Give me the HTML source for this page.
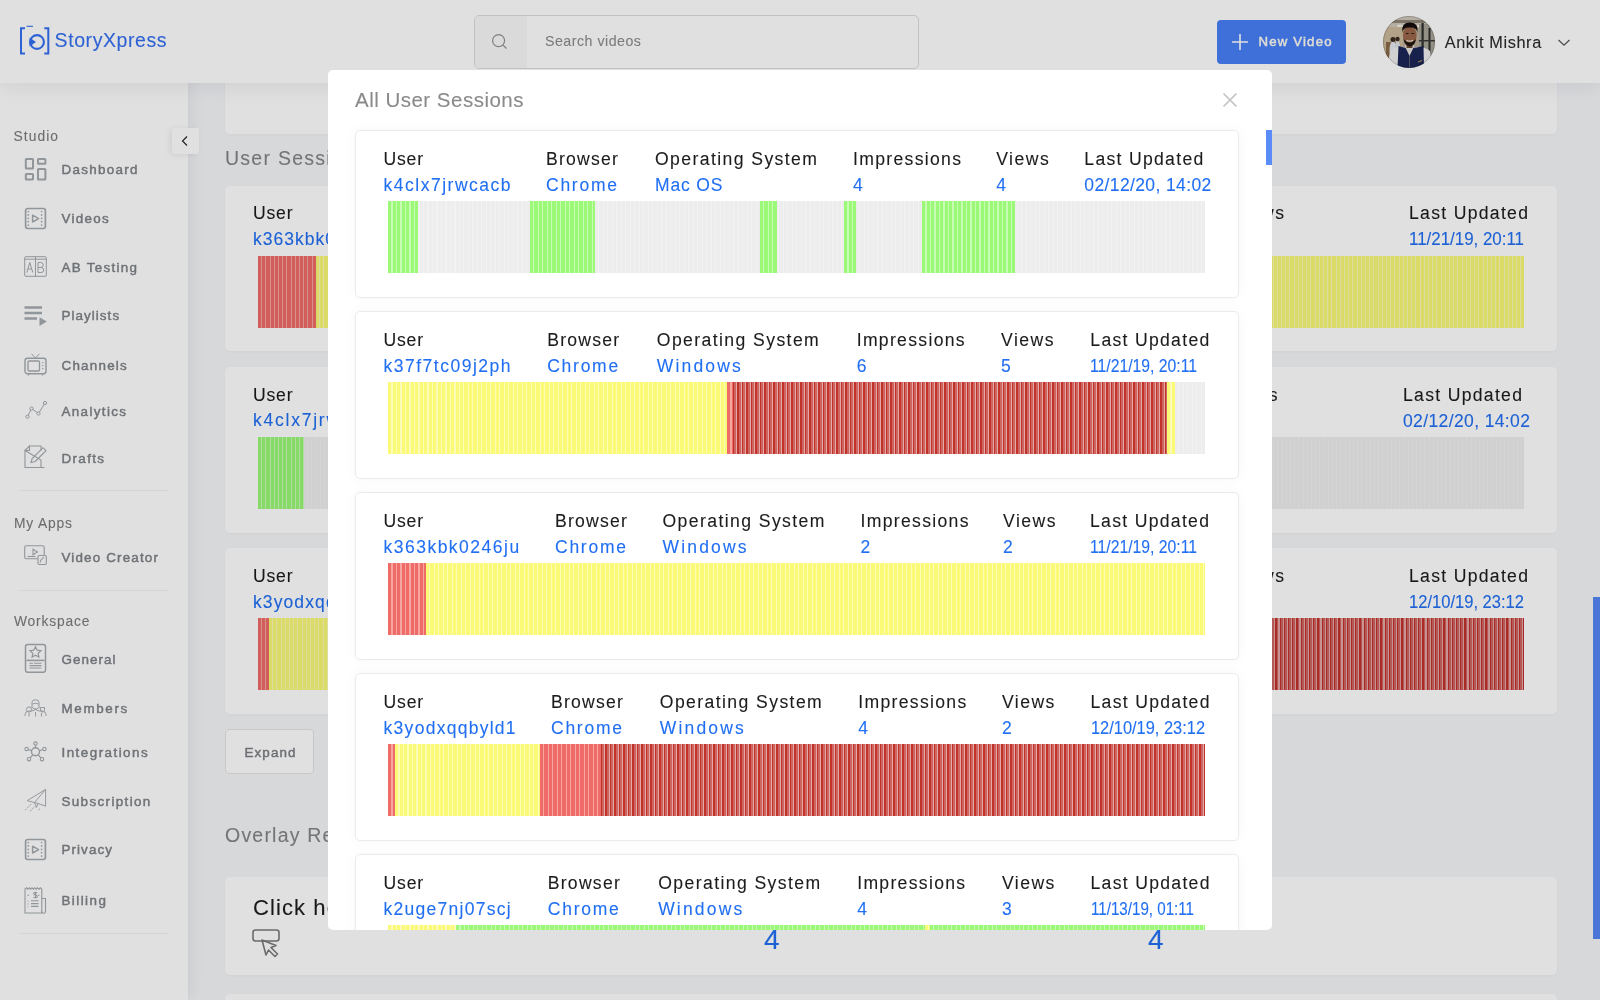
<!DOCTYPE html><html><head><meta charset="utf-8"><style>
html,body{margin:0;padding:0;}
body{width:1600px;height:1000px;overflow:hidden;position:relative;background:#f5f6f9;font-family:"Liberation Sans",sans-serif;}
.t{position:absolute;white-space:nowrap;-webkit-text-stroke:0.1px currentColor;}
.card{position:absolute;background:#fff;border-radius:5px;}
</style></head><body><div style="position:absolute;left:0;top:0;width:1600px;height:1000px;will-change:transform;overflow:hidden;">
<div class="card" style="left:225px;top:-60px;width:1332px;height:194px;box-shadow:0 1px 4px rgba(0,0,0,0.04);"></div>
<div class="t" style="left:225.0px;top:147.5px;font-size:19.5px;line-height:21.80px;color:#858585;letter-spacing:1.26px;font-weight:400;">User Sessions</div>
<div class="card" style="left:225px;top:185.5px;width:1332px;height:165.5px;box-shadow:0 1px 4px rgba(0,0,0,0.04);"></div>
<div class="t" style="left:253.0px;top:204.1px;font-size:17.6px;line-height:19.68px;color:#1c1c1c;letter-spacing:0.78px;font-weight:400;">User</div>
<div class="t" style="left:253.0px;top:229.6px;font-size:17.5px;line-height:19.57px;color:#216ff3;letter-spacing:1.02px;font-weight:400;">k363kbk0246ju</div>
<div class="t" style="left:1231.5px;top:204.1px;font-size:17.6px;line-height:19.68px;color:#1c1c1c;letter-spacing:1.47px;font-weight:400;">Views</div>
<div class="t" style="left:1409.0px;top:204.1px;font-size:17.6px;line-height:19.68px;color:#1c1c1c;letter-spacing:1.30px;font-weight:400;">Last Updated</div>
<div class="t" style="left:1409.0px;top:230.1px;font-size:17.5px;line-height:19.57px;color:#216ff3;letter-spacing:0.00px;font-weight:400;transform:scaleX(0.9662);transform-origin:0 0;">11/21/19, 20:11</div>
<div style="position:absolute;left:258.0px;top:255.5px;width:58.2px;height:72.0px;background:repeating-linear-gradient(90deg,#ee6b67 0,#ee6b67 3.2px,#f6a5a1 3.2px,#f6a5a1 4.2px);"></div>
<div style="position:absolute;left:316.2px;top:255.5px;width:1207.8px;height:72.0px;background:repeating-linear-gradient(90deg,#fafa76 0,#fafa76 3.2px,#fcfcb8 3.2px,#fcfcb8 4.2px);"></div>
<div class="card" style="left:225px;top:367px;width:1332px;height:165.5px;box-shadow:0 1px 4px rgba(0,0,0,0.04);"></div>
<div class="t" style="left:253.0px;top:385.6px;font-size:17.6px;line-height:19.68px;color:#1c1c1c;letter-spacing:0.78px;font-weight:400;">User</div>
<div class="t" style="left:253.0px;top:411.1px;font-size:17.5px;line-height:19.57px;color:#216ff3;letter-spacing:1.76px;font-weight:400;">k4clx7jrwcacb</div>
<div class="t" style="left:1225.0px;top:385.6px;font-size:17.6px;line-height:19.68px;color:#1c1c1c;letter-spacing:1.47px;font-weight:400;">Views</div>
<div class="t" style="left:1403.0px;top:385.6px;font-size:17.6px;line-height:19.68px;color:#1c1c1c;letter-spacing:1.30px;font-weight:400;">Last Updated</div>
<div class="t" style="left:1403.0px;top:411.6px;font-size:17.5px;line-height:19.57px;color:#216ff3;letter-spacing:0.38px;font-weight:400;">02/12/20, 14:02</div>
<div style="position:absolute;left:258.0px;top:437.0px;width:46.0px;height:72.0px;background:repeating-linear-gradient(90deg,#9bf977 0,#9bf977 3.2px,#c6fcb3 3.2px,#c6fcb3 4.2px);"></div>
<div style="position:absolute;left:304.0px;top:437.0px;width:1220.0px;height:72.0px;background:repeating-linear-gradient(90deg,#ededed 0,#ededed 3.2px,#f2f2f2 3.2px,#f2f2f2 4.2px);"></div>
<div class="card" style="left:225px;top:548.4px;width:1332px;height:165.5px;box-shadow:0 1px 4px rgba(0,0,0,0.04);"></div>
<div class="t" style="left:253.0px;top:567.0px;font-size:17.6px;line-height:19.68px;color:#1c1c1c;letter-spacing:0.78px;font-weight:400;">User</div>
<div class="t" style="left:253.0px;top:592.5px;font-size:17.5px;line-height:19.57px;color:#216ff3;letter-spacing:1.10px;font-weight:400;">k3yodxqqbyld1</div>
<div class="t" style="left:1231.5px;top:567.0px;font-size:17.6px;line-height:19.68px;color:#1c1c1c;letter-spacing:1.47px;font-weight:400;">Views</div>
<div class="t" style="left:1409.0px;top:567.0px;font-size:17.6px;line-height:19.68px;color:#1c1c1c;letter-spacing:1.30px;font-weight:400;">Last Updated</div>
<div class="t" style="left:1409.0px;top:593.0px;font-size:17.5px;line-height:19.57px;color:#216ff3;letter-spacing:0.00px;font-weight:400;transform:scaleX(0.9455);transform-origin:0 0;">12/10/19, 23:12</div>
<div style="position:absolute;left:258.0px;top:618.4px;width:11.4px;height:72.0px;background:repeating-linear-gradient(90deg,#ee6b67 0,#ee6b67 3.2px,#f6a5a1 3.2px,#f6a5a1 4.2px);"></div>
<div style="position:absolute;left:269.4px;top:618.4px;width:430.6px;height:72.0px;background:repeating-linear-gradient(90deg,#fafa76 0,#fafa76 3.2px,#fcfcb8 3.2px,#fcfcb8 4.2px);"></div>
<div style="position:absolute;left:700.0px;top:618.4px;width:824.0px;height:72.0px;background:repeating-linear-gradient(90deg,#c2322b 0,#c2322b 1.3px,#cd6661 1.3px,#cd6661 3.1px,#e3a9a6 3.1px,#e3a9a6 4.2px);"></div>
<div style="position:absolute;left:225px;top:729px;width:87px;height:43px;border:1px solid #e4e4e4;border-radius:4px;background:#fff;"></div>
<div class="t" style="left:244.5px;top:744.7px;font-size:13.4px;line-height:14.98px;color:#7b7e83;letter-spacing:1.11px;font-weight:400;-webkit-text-stroke:0.45px #7b7e83;">Expand</div>
<div class="t" style="left:225.0px;top:825.3px;font-size:19.5px;line-height:21.80px;color:#858585;letter-spacing:1.21px;font-weight:400;">Overlay Reports</div>
<div class="card" style="left:225px;top:876.5px;width:1332px;height:98.0px;box-shadow:0 1px 4px rgba(0,0,0,0.04);"></div>
<div class="t" style="left:253.0px;top:895.7px;font-size:22px;line-height:24.60px;color:#1c1c1c;letter-spacing:1.09px;font-weight:400;">Click here</div>
<svg style="position:absolute;left:250px;top:927px" width="34" height="32" viewBox="0 0 34 32"><rect x="3" y="3" width="26" height="11" rx="2.5" fill="none" stroke="#7a7a7a" stroke-width="1.6"/><path d="M12 13 L16 28 L18.5 23 L25 29.5 L27.5 27 L21 20.5 L26 18.5 Z" fill="#fff" stroke="#7a7a7a" stroke-width="1.6" stroke-linejoin="round"/></svg>
<div class="t" style="left:764.0px;top:924.4px;font-size:28px;line-height:31.30px;color:#216ff3;letter-spacing:0.00px;font-weight:400;">4</div>
<div class="t" style="left:1148.0px;top:924.4px;font-size:28px;line-height:31.30px;color:#216ff3;letter-spacing:0.00px;font-weight:400;">4</div>
<div class="card" style="left:225px;top:993.5px;width:1332px;height:106.5px;box-shadow:0 1px 4px rgba(0,0,0,0.04);"></div>
<div style="position:absolute;left:1593.0px;top:597.0px;width:7.0px;height:342.0px;background:#5588f5;"></div>
<div style="position:absolute;left:0;top:0;width:188px;height:1000px;background:#fff;box-shadow:2px 0 18px rgba(0,0,0,0.07);"></div>
<div class="t" style="left:13.6px;top:128.5px;font-size:13.8px;line-height:15.43px;color:#7d7d7d;letter-spacing:1.05px;font-weight:400;">Studio</div>
<svg style="position:absolute;left:24px;top:157px" width="23" height="24" viewBox="0 0 23 24"><g fill="none" stroke="#a6abb0" stroke-width="2"><rect x="1.8" y="2" width="7.2" height="9.6" rx="0.6"/><rect x="14" y="2" width="7.4" height="4.8" rx="0.6"/><rect x="1.8" y="17" width="7.2" height="5.6" rx="0.6"/><rect x="14" y="12" width="7.4" height="10.6" rx="0.6"/></g></svg>
<div class="t" style="left:61.5px;top:162.3px;font-size:13.4px;line-height:14.98px;color:#7e8287;letter-spacing:1.31px;font-weight:400;-webkit-text-stroke:0.45px #7e8287;">Dashboard</div>
<svg style="position:absolute;left:24px;top:206.5px" width="23" height="23" viewBox="0 0 23 23"><rect x="1.6" y="1.5" width="19.8" height="20" rx="2.2" fill="none" stroke="#a6abb0" stroke-width="1.7"/><circle cx="4.3" cy="4.5" r="0.85" fill="#a6abb0"/><circle cx="17.6" cy="4.5" r="0.85" fill="#a6abb0"/><circle cx="4.3" cy="7.9" r="0.85" fill="#a6abb0"/><circle cx="17.6" cy="7.9" r="0.85" fill="#a6abb0"/><circle cx="4.3" cy="11.3" r="0.85" fill="#a6abb0"/><circle cx="17.6" cy="11.3" r="0.85" fill="#a6abb0"/><circle cx="4.3" cy="14.7" r="0.85" fill="#a6abb0"/><circle cx="17.6" cy="14.7" r="0.85" fill="#a6abb0"/><circle cx="4.3" cy="18.1" r="0.85" fill="#a6abb0"/><circle cx="17.6" cy="18.1" r="0.85" fill="#a6abb0"/><path d="M8.6 8.2L14.6 11.6 8.6 15z" fill="none" stroke="#a6abb0" stroke-width="1.5" stroke-linejoin="round"/></svg>
<div class="t" style="left:61.5px;top:211.1px;font-size:13.4px;line-height:14.98px;color:#7e8287;letter-spacing:1.29px;font-weight:400;-webkit-text-stroke:0.45px #7e8287;">Videos</div>
<svg style="position:absolute;left:24px;top:256px" width="23" height="21" viewBox="0 0 23 21"><g fill="none" stroke="#a6abb0" stroke-width="1"><rect x="0.7" y="0.7" width="21.6" height="19.6" rx="1"/><path d="M0.7 3.2h21.6M11.5 0.7v19.6"/><path d="M2.8 16.5L5.8 6.5 8.8 16.5M3.8 13h4M14 6.5v10h3.2a2.5 2.5 0 000-5H14h2.8a2.5 2.5 0 000-5z"/></g></svg>
<div class="t" style="left:61.5px;top:259.6px;font-size:13.4px;line-height:14.98px;color:#7e8287;letter-spacing:1.31px;font-weight:400;-webkit-text-stroke:0.45px #7e8287;">AB Testing</div>
<svg style="position:absolute;left:24px;top:304px" width="23" height="23" viewBox="0 0 23 23"><path d="M0.5 3.5h17.5M0.5 9h17.5M0.5 14.5h12.5" stroke="#a6abb0" stroke-width="2.4"/><path d="M15.5 13.2L22.8 17.6 15.5 22z" fill="#a6abb0"/></svg>
<div class="t" style="left:61.5px;top:308.3px;font-size:13.4px;line-height:14.98px;color:#7e8287;letter-spacing:1.06px;font-weight:400;-webkit-text-stroke:0.45px #7e8287;">Playlists</div>
<svg style="position:absolute;left:24px;top:352.5px" width="23" height="23" viewBox="0 0 23 23"><g fill="none" stroke="#a6abb0"><path d="M7.5 0.8L11.5 5 15.5 0.8" stroke-width="1"/><rect x="1" y="5.2" width="21" height="15.5" rx="2.5" stroke-width="1.4"/><rect x="4" y="8" width="11.5" height="10" rx="1.2" stroke-width="1.3"/><path d="M18.8 9v1.2M18.8 12v1.2M18.8 15v1.2M4.5 21v1.5M18.5 21v1.5" stroke-width="1.2"/></g></svg>
<div class="t" style="left:61.5px;top:357.5px;font-size:13.4px;line-height:14.98px;color:#7e8287;letter-spacing:1.24px;font-weight:400;-webkit-text-stroke:0.45px #7e8287;">Channels</div>
<svg style="position:absolute;left:24px;top:400px" width="23" height="20" viewBox="0 0 23 20"><g fill="none" stroke="#a6abb0" stroke-width="1"><path d="M3.5 16.7L7.5 8.6 14.5 13.5 21 3"/><circle cx="3.5" cy="16.7" r="1.6" fill="#fff"/><circle cx="7.5" cy="8.6" r="1.6" fill="#fff"/><circle cx="14.5" cy="13.5" r="1.6" fill="#fff"/><circle cx="21" cy="3" r="1.6" fill="#fff"/></g></svg>
<div class="t" style="left:61.5px;top:404.3px;font-size:13.4px;line-height:14.98px;color:#7e8287;letter-spacing:1.37px;font-weight:400;-webkit-text-stroke:0.45px #7e8287;">Analytics</div>
<svg style="position:absolute;left:24px;top:444.5px" width="23" height="24" viewBox="0 0 23 24"><g fill="none" stroke="#a6abb0" stroke-width="1.1"><path d="M5.5 1h11.5v5M17 15v7.5H1V5.5z M5.5 1L1 5.5h4.5z"/><path d="M7 17.5l1.2-4L19 2.7l3 3L11.2 16.5z M4.5 22.5h16"/></g></svg>
<div class="t" style="left:61.5px;top:450.6px;font-size:13.4px;line-height:14.98px;color:#7e8287;letter-spacing:1.35px;font-weight:400;-webkit-text-stroke:0.45px #7e8287;">Drafts</div>
<div style="position:absolute;left:19.0px;top:490.3px;width:150.0px;height:1.0px;background:#f2f3f5;"></div>
<div class="t" style="left:14.0px;top:516.0px;font-size:13.8px;line-height:15.43px;color:#7d7d7d;letter-spacing:0.85px;font-weight:400;">My Apps</div>
<svg style="position:absolute;left:24px;top:545px" width="23" height="21" viewBox="0 0 23 21"><g fill="none" stroke="#a6abb0" stroke-width="1.1"><rect x="0.7" y="0.7" width="19.5" height="13" rx="1.5"/><path d="M9 4.2l4.5 2.8L9 9.8z"/><path d="M3.5 11.5h8"/><rect x="14" y="10.5" width="8.3" height="9" rx="1.2" fill="#fff"/><path d="M16 17.5l0.8-2.3 3-3"/></g></svg>
<div class="t" style="left:61.5px;top:549.5px;font-size:13.4px;line-height:14.98px;color:#7e8287;letter-spacing:1.17px;font-weight:400;-webkit-text-stroke:0.45px #7e8287;">Video Creator</div>
<div style="position:absolute;left:19.0px;top:589.5px;width:150.0px;height:1.0px;background:#f2f3f5;"></div>
<div class="t" style="left:14.0px;top:614.4px;font-size:13.8px;line-height:15.43px;color:#7d7d7d;letter-spacing:0.83px;font-weight:400;">Workspace</div>
<svg style="position:absolute;left:24px;top:642.5px" width="23" height="30" viewBox="0 0 23 30"><g fill="none" stroke="#a6abb0"><rect x="1.5" y="1.5" width="20" height="27.8" rx="2.3" stroke-width="1.5"/><path d="M11.5 3.7l1.7 3.5 3.8.5-2.8 2.6.7 3.8-3.4-1.9-3.4 1.9.7-3.8-2.8-2.6 3.8-.5z" stroke-width="1.2"/><path d="M2.5 17.4h18" stroke-width="1.6"/><path d="M5.5 20.3h3.5M10 20.3h7.5M5.5 22.6h12M5.5 25h12" stroke-width="1.1"/></g></svg>
<div class="t" style="left:61.5px;top:651.9px;font-size:13.4px;line-height:14.98px;color:#7e8287;letter-spacing:1.06px;font-weight:400;-webkit-text-stroke:0.45px #7e8287;">General</div>
<svg style="position:absolute;left:24px;top:698.5px" width="23" height="18" viewBox="0 0 23 18"><g fill="none" stroke="#a6abb0" stroke-width="0.95"><path d="M8 9.5V3.3Q8 0.8 11.5 0.8Q15 0.8 15 3.3V9.5"/><path d="M8.2 5Q11.5 3.5 14.8 5"/><path d="M8.5 8.5Q11.5 12 14.5 8.5"/><circle cx="5" cy="10.5" r="2.6"/><path d="M16.5 8.5h4v2.5a2 2 0 01-4 0z"/><path d="M1 17v-1.5q0-3 4-3.5l2.5 0q4-0.5 4 -2.5q0 2 4 2.5l2.5 0q4 0.5 4 3.5V17"/><path d="M5 14v3.5M11.5 13v4.5M17.5 14v3.5"/></g></svg>
<div class="t" style="left:61.5px;top:700.7px;font-size:13.4px;line-height:14.98px;color:#7e8287;letter-spacing:1.66px;font-weight:400;-webkit-text-stroke:0.45px #7e8287;">Members</div>
<svg style="position:absolute;left:24px;top:741px" width="23" height="21" viewBox="0 0 23 21"><g fill="none" stroke="#a6abb0"><circle cx="11.5" cy="10.8" r="4" stroke-width="1.4"/><circle cx="11.5" cy="2.6" r="1.7" stroke-width="1.1"/><circle cx="2.6" cy="8" r="1.7" stroke-width="1.1"/><circle cx="20.4" cy="8" r="1.7" stroke-width="1.1"/><circle cx="5" cy="18.2" r="1.7" stroke-width="1.1"/><circle cx="18" cy="18.2" r="1.7" stroke-width="1.1"/><path d="M11.5 4.3v2.5M4.2 8.5l3.5 1.3M18.8 8.5l-3.5 1.3M6.2 16.9l2.5-3M16.8 16.9l-2.5-3" stroke-width="1.1"/></g></svg>
<div class="t" style="left:61.5px;top:745.1px;font-size:13.4px;line-height:14.98px;color:#7e8287;letter-spacing:1.47px;font-weight:400;-webkit-text-stroke:0.45px #7e8287;">Integrations</div>
<svg style="position:absolute;left:24px;top:788px" width="23" height="24" viewBox="0 0 23 24"><g fill="none" stroke="#a6abb0" stroke-width="0.95" stroke-linejoin="round"><path d="M3.2 12.6L21.6 1.4V18.2L14 15.5z"/><path d="M21.6 1.4L10.5 14.5 12.4 19.6 14 15.5"/><path d="M1.2 22.2L8 15.2M6 23.2L11 18.5M14.5 22L17 20" stroke-dasharray="2 1.2"/></g></svg>
<div class="t" style="left:61.5px;top:793.6px;font-size:13.4px;line-height:14.98px;color:#7e8287;letter-spacing:1.37px;font-weight:400;-webkit-text-stroke:0.45px #7e8287;">Subscription</div>
<svg style="position:absolute;left:24px;top:837.5px" width="23" height="23" viewBox="0 0 23 23"><rect x="1.6" y="1.5" width="19.8" height="20" rx="2.2" fill="none" stroke="#a6abb0" stroke-width="1.7"/><circle cx="4.3" cy="4.5" r="0.85" fill="#a6abb0"/><circle cx="17.6" cy="4.5" r="0.85" fill="#a6abb0"/><circle cx="4.3" cy="7.9" r="0.85" fill="#a6abb0"/><circle cx="17.6" cy="7.9" r="0.85" fill="#a6abb0"/><circle cx="4.3" cy="11.3" r="0.85" fill="#a6abb0"/><circle cx="17.6" cy="11.3" r="0.85" fill="#a6abb0"/><circle cx="4.3" cy="14.7" r="0.85" fill="#a6abb0"/><circle cx="17.6" cy="14.7" r="0.85" fill="#a6abb0"/><circle cx="4.3" cy="18.1" r="0.85" fill="#a6abb0"/><circle cx="17.6" cy="18.1" r="0.85" fill="#a6abb0"/><path d="M8.6 8.2L14.6 11.6 8.6 15z" fill="none" stroke="#a6abb0" stroke-width="1.5" stroke-linejoin="round"/></svg>
<div class="t" style="left:61.5px;top:842.3px;font-size:13.4px;line-height:14.98px;color:#7e8287;letter-spacing:1.08px;font-weight:400;-webkit-text-stroke:0.45px #7e8287;">Privacy</div>
<svg style="position:absolute;left:24px;top:886.5px" width="23" height="27" viewBox="0 0 23 27"><g fill="none" stroke="#a6abb0" stroke-width="1.1"><path d="M1 2.2l1.4-1.4 1.4 1.4 1.4-1.4 1.4 1.4 1.4-1.4 1.4 1.4 1.4-1.4 1.4 1.4 1.4-1.4 1.4 1.4 1.4-1.4 1.4 1.4V26H1z"/><path d="M18 11.5h3.5v13a1.7 1.7 0 01-3.5 0"/><path d="M3.5 8.2h1.5M14 8.2h1.5M4 13.8v.8M4 16.6v.8M4 19.4v.8M7 13.8h7.5M7 16.6h7.5M7 19.4h7.5"/><path d="M11.5 4.8v6.5M13.2 6.2q-1-1-2.2-0.8q-1.5 0.3-1.3 1.5q0.2 1 1.7 1.2q1.8 0.3 1.8 1.5q0 1.3-1.8 1.2q-1.3 0-2-0.8"/></g></svg>
<div class="t" style="left:61.5px;top:892.7px;font-size:13.4px;line-height:14.98px;color:#7e8287;letter-spacing:1.44px;font-weight:400;-webkit-text-stroke:0.45px #7e8287;">Billing</div>
<div style="position:absolute;left:19.0px;top:933.0px;width:150.0px;height:1.0px;background:#f2f3f5;"></div>
<div style="position:absolute;left:0;top:0;width:1600px;height:83px;background:#fff;box-shadow:0 3px 22px rgba(0,0,0,0.08);"></div>
<svg style="position:absolute;left:18px;top:24px" width="34" height="32" viewBox="0 0 34 32">
<path d="M7 4.3H3V29.6H7" fill="none" stroke="#3570f2" stroke-width="2"/>
<path d="M26.3 4.3H30.3V29.6H26.3" fill="none" stroke="#3570f2" stroke-width="2"/>
<path d="M8.5 2.3H15" stroke="#3570f2" stroke-width="1.1"/>
<circle cx="19" cy="18" r="6.9" fill="none" stroke="#3570f2" stroke-width="2.1"/>
<path d="M11.6 13.6L18 18L11.6 22.6Z" fill="#3570f2"/>
</svg>
<div class="t" style="left:54.6px;top:29.7px;font-size:19.5px;line-height:21.80px;color:#3570f2;letter-spacing:0.58px;font-weight:400;">StoryXpress</div>
<div style="position:absolute;left:473.5px;top:14.5px;width:443px;height:52px;border:1px solid #dcdde0;border-top-width:1.5px;border-radius:5px;background:#fff;overflow:hidden;"><div style="position:absolute;left:0;top:0;width:52px;height:100%;background:#f9f9f9;"></div></div>
<svg style="position:absolute;left:489px;top:31px" width="22" height="22" viewBox="0 0 22 22"><circle cx="9.6" cy="9.6" r="6" fill="none" stroke="#8f9296" stroke-width="1.2"/><path d="M13.8 13.8L17.5 17.5" stroke="#8f9296" stroke-width="1.2"/></svg>
<div class="t" style="left:545.0px;top:34.0px;font-size:14.2px;line-height:15.88px;color:#8e8e8e;letter-spacing:0.50px;font-weight:400;">Search videos</div>
<div style="position:absolute;left:1216.7px;top:19.8px;width:129.7px;height:44.4px;background:#4880f7;border-radius:4px;"></div>
<svg style="position:absolute;left:1231px;top:33px" width="18" height="18" viewBox="0 0 18 18"><path d="M9 1v16M1 9h16" stroke="#fff" stroke-width="1.6"/></svg>
<div class="t" style="left:1258.5px;top:34.7px;font-size:13.2px;line-height:14.76px;color:#fdfaf2;letter-spacing:1.18px;font-weight:400;-webkit-text-stroke:0.5px #fdfaf2;">New Video</div>
<svg style="position:absolute;left:1382.9px;top:15.6px" width="52" height="52" viewBox="0 0 52 52">
<defs><clipPath id="av"><circle cx="26" cy="26" r="26"/></clipPath><filter id="bl"><feGaussianBlur stdDeviation="0.55"/></filter></defs>
<g clip-path="url(#av)"><g filter="url(#bl)">
<rect width="52" height="52" fill="#b9ae98"/>
<rect x="0" y="0" width="52" height="11" fill="#cfc8ba"/>
<rect x="4" y="4" width="40" height="3" fill="#8e8574"/>
<ellipse cx="17" cy="10" rx="3" ry="1.5" fill="#f2eee4"/>
<ellipse cx="37" cy="10" rx="3" ry="1.5" fill="#f2eee4"/>
<rect x="0" y="11" width="20" height="26" fill="#cbb99a"/>
<rect x="3" y="26" width="10" height="20" fill="#8a6a4a"/>
<rect x="36" y="8" width="16" height="44" fill="#a8a498"/>
<rect x="38.5" y="7" width="2.2" height="40" fill="#2e2e2c"/>
<rect x="45.5" y="12" width="2" height="36" fill="#2e2e2c"/>
<rect x="36" y="24" width="16" height="1.5" fill="#3a3a38"/>
<ellipse cx="10" cy="34" rx="3.5" ry="9" fill="#e6e8ee"/>
<circle cx="10" cy="23.5" r="2.5" fill="#3a2a20"/>
<ellipse cx="14.5" cy="33" rx="2.8" ry="8" fill="#dfe2ea"/>
<circle cx="14.5" cy="23" r="2.2" fill="#3a2a20"/>
<path d="M4 52 L7 36 Q11 31 17 31 L35 31 Q42 31 47 35 L50 52Z" fill="#f0eef0"/>
<path d="M14.5 52 L15.5 30 Q26 34 40.5 30 L41 52Z" fill="#1d2556"/>
<path d="M21.5 29.5 L26.5 40 L31.5 29.5Z" fill="#e8e4e0"/><path d="M26.5 40 L26.5 52" stroke="#6a6a70" stroke-width="0.8"/>
<rect x="23.5" y="27" width="6" height="5" fill="#6e4a34"/>
<ellipse cx="26.8" cy="19.5" rx="6.8" ry="9.8" fill="#9a6648"/>
<path d="M19.2 17 Q18 6 26.8 6.5 Q36 6 34.4 17 Q34 11 26.8 11.5 Q20 11 19.2 17Z" fill="#17110d"/>
<path d="M20.5 23 Q21.5 30 26.8 30.5 Q32 30 33 23 Q30 26.5 26.8 26.5 Q23.5 26.5 20.5 23Z" fill="#241710"/>
<path d="M23.5 24.2 Q26.8 26.2 30 24.2" stroke="#efe6dc" stroke-width="1.3" fill="none"/>
<path d="M23 17.5h2.5M28.5 17.5h2.5" stroke="#2a1a12" stroke-width="1"/>
<path d="M35 46 l4 -1.5" stroke="#b89a5a" stroke-width="1"/>
</g></g><circle cx="26" cy="26" r="25.6" fill="none" stroke="rgba(0,0,0,0.25)" stroke-width="0.8"/></svg>
<div class="t" style="left:1444.7px;top:33.0px;font-size:16.3px;line-height:18.22px;color:#2b2b2b;letter-spacing:0.63px;font-weight:400;">Ankit Mishra</div>
<svg style="position:absolute;left:1557px;top:38px" width="14" height="9" viewBox="0 0 14 9"><path d="M1.5 2L7 7.2 12.5 2" fill="none" stroke="#555" stroke-width="1.2"/></svg>
<div style="position:absolute;left:172px;top:128px;width:27px;height:26px;background:#fff;border-radius:3px;box-shadow:-2px 1px 6px rgba(0,0,0,0.08);"></div>
<svg style="position:absolute;left:178px;top:134px" width="14" height="14" viewBox="0 0 14 14"><path d="M9 2.5L4.5 7 9 11.5" fill="none" stroke="#222" stroke-width="1.1"/></svg>
<div style="position:absolute;left:0;top:0;width:1600px;height:1000px;background:rgba(0,0,0,0.12);"></div>
<div style="position:absolute;left:328px;top:70px;width:944px;height:860px;background:#fff;border-radius:5px;overflow:hidden;">
<div style="position:absolute;left:-328px;top:-70px;width:1600px;height:1000px;">
<div class="t" style="left:355.0px;top:88.9px;font-size:20.5px;line-height:22.92px;color:#8a8a8a;letter-spacing:0.49px;font-weight:400;">All User Sessions</div>
<svg style="position:absolute;left:1221px;top:91px" width="18" height="18" viewBox="0 0 18 18"><path d="M2.5 2.5L15.5 15.5M15.5 2.5L2.5 15.5" stroke="#c3c3c3" stroke-width="1.7"/></svg>
<div style="position:absolute;left:1266.0px;top:130.0px;width:6.0px;height:35.0px;background:#5a8cf7;"></div>
<div class="card" style="left:355px;top:130.0px;width:881.5px;height:166px;border:1px solid #ebebeb;border-radius:5px;box-shadow:0 0 14px rgba(0,0,0,0.035);"></div>
<div class="t" style="left:383.5px;top:149.8px;font-size:17.6px;line-height:19.68px;color:#1c1c1c;letter-spacing:0.78px;font-weight:400;">User</div>
<div class="t" style="left:383.5px;top:175.8px;font-size:17.5px;line-height:19.57px;color:#216ff3;letter-spacing:1.51px;font-weight:400;">k4clx7jrwcacb</div>
<div class="t" style="left:546.0px;top:149.8px;font-size:17.6px;line-height:19.68px;color:#1c1c1c;letter-spacing:1.24px;font-weight:400;">Browser</div>
<div class="t" style="left:546.0px;top:175.8px;font-size:17.5px;line-height:19.57px;color:#216ff3;letter-spacing:1.75px;font-weight:400;">Chrome</div>
<div class="t" style="left:655.0px;top:149.8px;font-size:17.6px;line-height:19.68px;color:#1c1c1c;letter-spacing:1.41px;font-weight:400;">Operating System</div>
<div class="t" style="left:655.0px;top:175.8px;font-size:17.5px;line-height:19.57px;color:#216ff3;letter-spacing:0.86px;font-weight:400;">Mac OS</div>
<div class="t" style="left:853.0px;top:149.8px;font-size:17.6px;line-height:19.68px;color:#1c1c1c;letter-spacing:1.31px;font-weight:400;">Impressions</div>
<div class="t" style="left:853.0px;top:175.8px;font-size:17.5px;line-height:19.57px;color:#216ff3;letter-spacing:0.00px;font-weight:400;">4</div>
<div class="t" style="left:996.2px;top:149.8px;font-size:17.6px;line-height:19.68px;color:#1c1c1c;letter-spacing:1.47px;font-weight:400;">Views</div>
<div class="t" style="left:996.2px;top:175.8px;font-size:17.5px;line-height:19.57px;color:#216ff3;letter-spacing:0.00px;font-weight:400;">4</div>
<div class="t" style="left:1084.3px;top:149.8px;font-size:17.6px;line-height:19.68px;color:#1c1c1c;letter-spacing:1.30px;font-weight:400;">Last Updated</div>
<div class="t" style="left:1084.3px;top:175.8px;font-size:17.5px;line-height:19.57px;color:#216ff3;letter-spacing:0.38px;font-weight:400;">02/12/20, 14:02</div>
<div style="position:absolute;left:388.0px;top:201.0px;width:817.0px;height:72.0px;background:repeating-linear-gradient(90deg,#ededed 0,#ededed 3.3px,#f2f2f2 3.3px,#f2f2f2 4.5px);"></div>
<div style="position:absolute;left:388.0px;top:201.0px;width:30.0px;height:72.0px;background:repeating-linear-gradient(90deg,#9bf977 0,#9bf977 3.3px,#c6fcb3 3.3px,#c6fcb3 4.5px);"></div>
<div style="position:absolute;left:529.6px;top:201.0px;width:65.6px;height:72.0px;background:repeating-linear-gradient(90deg,#9bf977 0,#9bf977 3.3px,#c6fcb3 3.3px,#c6fcb3 4.5px);"></div>
<div style="position:absolute;left:760.0px;top:201.0px;width:17.0px;height:72.0px;background:repeating-linear-gradient(90deg,#9bf977 0,#9bf977 3.3px,#c6fcb3 3.3px,#c6fcb3 4.5px);"></div>
<div style="position:absolute;left:843.8px;top:201.0px;width:12.2px;height:72.0px;background:repeating-linear-gradient(90deg,#9bf977 0,#9bf977 3.3px,#c6fcb3 3.3px,#c6fcb3 4.5px);"></div>
<div style="position:absolute;left:921.7px;top:201.0px;width:93.6px;height:72.0px;background:repeating-linear-gradient(90deg,#9bf977 0,#9bf977 3.3px,#c6fcb3 3.3px,#c6fcb3 4.5px);"></div>
<div class="card" style="left:355px;top:311.0px;width:881.5px;height:166px;border:1px solid #ebebeb;border-radius:5px;box-shadow:0 0 14px rgba(0,0,0,0.035);"></div>
<div class="t" style="left:383.5px;top:330.8px;font-size:17.6px;line-height:19.68px;color:#1c1c1c;letter-spacing:0.78px;font-weight:400;">User</div>
<div class="t" style="left:383.5px;top:356.8px;font-size:17.5px;line-height:19.57px;color:#216ff3;letter-spacing:1.50px;font-weight:400;">k37f7tc09j2ph</div>
<div class="t" style="left:547.2px;top:330.8px;font-size:17.6px;line-height:19.68px;color:#1c1c1c;letter-spacing:1.24px;font-weight:400;">Browser</div>
<div class="t" style="left:547.2px;top:356.8px;font-size:17.5px;line-height:19.57px;color:#216ff3;letter-spacing:1.75px;font-weight:400;">Chrome</div>
<div class="t" style="left:656.8px;top:330.8px;font-size:17.6px;line-height:19.68px;color:#1c1c1c;letter-spacing:1.41px;font-weight:400;">Operating System</div>
<div class="t" style="left:656.8px;top:356.8px;font-size:17.5px;line-height:19.57px;color:#216ff3;letter-spacing:2.17px;font-weight:400;">Windows</div>
<div class="t" style="left:856.7px;top:330.8px;font-size:17.6px;line-height:19.68px;color:#1c1c1c;letter-spacing:1.31px;font-weight:400;">Impressions</div>
<div class="t" style="left:856.7px;top:356.8px;font-size:17.5px;line-height:19.57px;color:#216ff3;letter-spacing:0.00px;font-weight:400;">6</div>
<div class="t" style="left:1001.0px;top:330.8px;font-size:17.6px;line-height:19.68px;color:#1c1c1c;letter-spacing:1.47px;font-weight:400;">Views</div>
<div class="t" style="left:1001.0px;top:356.8px;font-size:17.5px;line-height:19.57px;color:#216ff3;letter-spacing:0.00px;font-weight:400;">5</div>
<div class="t" style="left:1090.3px;top:330.8px;font-size:17.6px;line-height:19.68px;color:#1c1c1c;letter-spacing:1.30px;font-weight:400;">Last Updated</div>
<div class="t" style="left:1090.3px;top:356.8px;font-size:17.5px;line-height:19.57px;color:#216ff3;letter-spacing:0.00px;font-weight:400;transform:scaleX(0.8990);transform-origin:0 0;">11/21/19, 20:11</div>
<div style="position:absolute;left:388.0px;top:382.0px;width:339.0px;height:72.0px;background:repeating-linear-gradient(90deg,#fafa76 0,#fafa76 3.3px,#fcfcb8 3.3px,#fcfcb8 4.5px);"></div>
<div style="position:absolute;left:727.0px;top:382.0px;width:6.0px;height:72.0px;background:repeating-linear-gradient(90deg,#ee6b67 0,#ee6b67 3.3px,#f6a5a1 3.3px,#f6a5a1 4.5px);"></div>
<div style="position:absolute;left:733.0px;top:382.0px;width:434.2px;height:72.0px;background:repeating-linear-gradient(90deg,#c2322b 0,#c2322b 1.3px,#cd6661 1.3px,#cd6661 3.4px,#e3a9a6 3.4px,#e3a9a6 4.5px);"></div>
<div style="position:absolute;left:1167.2px;top:382.0px;width:8.0px;height:72.0px;background:repeating-linear-gradient(90deg,#fafa76 0,#fafa76 3.3px,#fcfcb8 3.3px,#fcfcb8 4.5px);"></div>
<div style="position:absolute;left:1175.2px;top:382.0px;width:29.8px;height:72.0px;background:repeating-linear-gradient(90deg,#ededed 0,#ededed 3.3px,#f2f2f2 3.3px,#f2f2f2 4.5px);"></div>
<div class="card" style="left:355px;top:492.0px;width:881.5px;height:166px;border:1px solid #ebebeb;border-radius:5px;box-shadow:0 0 14px rgba(0,0,0,0.035);"></div>
<div class="t" style="left:383.5px;top:511.8px;font-size:17.6px;line-height:19.68px;color:#1c1c1c;letter-spacing:0.78px;font-weight:400;">User</div>
<div class="t" style="left:383.5px;top:537.8px;font-size:17.5px;line-height:19.57px;color:#216ff3;letter-spacing:1.49px;font-weight:400;">k363kbk0246ju</div>
<div class="t" style="left:555.0px;top:511.8px;font-size:17.6px;line-height:19.68px;color:#1c1c1c;letter-spacing:1.24px;font-weight:400;">Browser</div>
<div class="t" style="left:555.0px;top:537.8px;font-size:17.5px;line-height:19.57px;color:#216ff3;letter-spacing:1.75px;font-weight:400;">Chrome</div>
<div class="t" style="left:662.5px;top:511.8px;font-size:17.6px;line-height:19.68px;color:#1c1c1c;letter-spacing:1.41px;font-weight:400;">Operating System</div>
<div class="t" style="left:662.5px;top:537.8px;font-size:17.5px;line-height:19.57px;color:#216ff3;letter-spacing:2.17px;font-weight:400;">Windows</div>
<div class="t" style="left:860.5px;top:511.8px;font-size:17.6px;line-height:19.68px;color:#1c1c1c;letter-spacing:1.31px;font-weight:400;">Impressions</div>
<div class="t" style="left:860.5px;top:537.8px;font-size:17.5px;line-height:19.57px;color:#216ff3;letter-spacing:0.00px;font-weight:400;">2</div>
<div class="t" style="left:1003.0px;top:511.8px;font-size:17.6px;line-height:19.68px;color:#1c1c1c;letter-spacing:1.47px;font-weight:400;">Views</div>
<div class="t" style="left:1003.0px;top:537.8px;font-size:17.5px;line-height:19.57px;color:#216ff3;letter-spacing:0.00px;font-weight:400;">2</div>
<div class="t" style="left:1090.0px;top:511.8px;font-size:17.6px;line-height:19.68px;color:#1c1c1c;letter-spacing:1.30px;font-weight:400;">Last Updated</div>
<div class="t" style="left:1090.0px;top:537.8px;font-size:17.5px;line-height:19.57px;color:#216ff3;letter-spacing:0.00px;font-weight:400;transform:scaleX(0.8990);transform-origin:0 0;">11/21/19, 20:11</div>
<div style="position:absolute;left:388.0px;top:563.0px;width:37.5px;height:72.0px;background:repeating-linear-gradient(90deg,#ee6b67 0,#ee6b67 3.3px,#f6a5a1 3.3px,#f6a5a1 4.5px);"></div>
<div style="position:absolute;left:425.5px;top:563.0px;width:779.5px;height:72.0px;background:repeating-linear-gradient(90deg,#fafa76 0,#fafa76 3.3px,#fcfcb8 3.3px,#fcfcb8 4.5px);"></div>
<div class="card" style="left:355px;top:673.0px;width:881.5px;height:166px;border:1px solid #ebebeb;border-radius:5px;box-shadow:0 0 14px rgba(0,0,0,0.035);"></div>
<div class="t" style="left:383.6px;top:692.8px;font-size:17.6px;line-height:19.68px;color:#1c1c1c;letter-spacing:0.78px;font-weight:400;">User</div>
<div class="t" style="left:383.6px;top:718.8px;font-size:17.5px;line-height:19.57px;color:#216ff3;letter-spacing:1.27px;font-weight:400;">k3yodxqqbyld1</div>
<div class="t" style="left:551.0px;top:692.8px;font-size:17.6px;line-height:19.68px;color:#1c1c1c;letter-spacing:1.24px;font-weight:400;">Browser</div>
<div class="t" style="left:551.0px;top:718.8px;font-size:17.5px;line-height:19.57px;color:#216ff3;letter-spacing:1.75px;font-weight:400;">Chrome</div>
<div class="t" style="left:659.8px;top:692.8px;font-size:17.6px;line-height:19.68px;color:#1c1c1c;letter-spacing:1.41px;font-weight:400;">Operating System</div>
<div class="t" style="left:659.8px;top:718.8px;font-size:17.5px;line-height:19.57px;color:#216ff3;letter-spacing:2.17px;font-weight:400;">Windows</div>
<div class="t" style="left:858.3px;top:692.8px;font-size:17.6px;line-height:19.68px;color:#1c1c1c;letter-spacing:1.31px;font-weight:400;">Impressions</div>
<div class="t" style="left:858.3px;top:718.8px;font-size:17.5px;line-height:19.57px;color:#216ff3;letter-spacing:0.00px;font-weight:400;">4</div>
<div class="t" style="left:1001.9px;top:692.8px;font-size:17.6px;line-height:19.68px;color:#1c1c1c;letter-spacing:1.47px;font-weight:400;">Views</div>
<div class="t" style="left:1001.9px;top:718.8px;font-size:17.5px;line-height:19.57px;color:#216ff3;letter-spacing:0.00px;font-weight:400;">2</div>
<div class="t" style="left:1090.5px;top:692.8px;font-size:17.6px;line-height:19.68px;color:#1c1c1c;letter-spacing:1.30px;font-weight:400;">Last Updated</div>
<div class="t" style="left:1090.5px;top:718.8px;font-size:17.5px;line-height:19.57px;color:#216ff3;letter-spacing:0.00px;font-weight:400;transform:scaleX(0.9373);transform-origin:0 0;">12/10/19, 23:12</div>
<div style="position:absolute;left:388.0px;top:744.0px;width:7.0px;height:72.0px;background:repeating-linear-gradient(90deg,#ee6b67 0,#ee6b67 3.3px,#f6a5a1 3.3px,#f6a5a1 4.5px);"></div>
<div style="position:absolute;left:395.0px;top:744.0px;width:145.0px;height:72.0px;background:repeating-linear-gradient(90deg,#fafa76 0,#fafa76 3.3px,#fcfcb8 3.3px,#fcfcb8 4.5px);"></div>
<div style="position:absolute;left:540.0px;top:744.0px;width:60.7px;height:72.0px;background:repeating-linear-gradient(90deg,#ee6b67 0,#ee6b67 3.3px,#f6a5a1 3.3px,#f6a5a1 4.5px);"></div>
<div style="position:absolute;left:600.7px;top:744.0px;width:604.3px;height:72.0px;background:repeating-linear-gradient(90deg,#c2322b 0,#c2322b 1.3px,#cd6661 1.3px,#cd6661 3.4px,#e3a9a6 3.4px,#e3a9a6 4.5px);"></div>
<div class="card" style="left:355px;top:854.0px;width:881.5px;height:166px;border:1px solid #ebebeb;border-radius:5px;box-shadow:0 0 14px rgba(0,0,0,0.035);"></div>
<div class="t" style="left:383.6px;top:873.8px;font-size:17.6px;line-height:19.68px;color:#1c1c1c;letter-spacing:0.78px;font-weight:400;">User</div>
<div class="t" style="left:383.6px;top:899.8px;font-size:17.5px;line-height:19.57px;color:#216ff3;letter-spacing:1.26px;font-weight:400;">k2uge7nj07scj</div>
<div class="t" style="left:547.8px;top:873.8px;font-size:17.6px;line-height:19.68px;color:#1c1c1c;letter-spacing:1.24px;font-weight:400;">Browser</div>
<div class="t" style="left:547.8px;top:899.8px;font-size:17.5px;line-height:19.57px;color:#216ff3;letter-spacing:1.75px;font-weight:400;">Chrome</div>
<div class="t" style="left:658.2px;top:873.8px;font-size:17.6px;line-height:19.68px;color:#1c1c1c;letter-spacing:1.41px;font-weight:400;">Operating System</div>
<div class="t" style="left:658.2px;top:899.8px;font-size:17.5px;line-height:19.57px;color:#216ff3;letter-spacing:2.17px;font-weight:400;">Windows</div>
<div class="t" style="left:857.2px;top:873.8px;font-size:17.6px;line-height:19.68px;color:#1c1c1c;letter-spacing:1.31px;font-weight:400;">Impressions</div>
<div class="t" style="left:857.2px;top:899.8px;font-size:17.5px;line-height:19.57px;color:#216ff3;letter-spacing:0.00px;font-weight:400;">4</div>
<div class="t" style="left:1001.9px;top:873.8px;font-size:17.6px;line-height:19.68px;color:#1c1c1c;letter-spacing:1.47px;font-weight:400;">Views</div>
<div class="t" style="left:1001.9px;top:899.8px;font-size:17.5px;line-height:19.57px;color:#216ff3;letter-spacing:0.00px;font-weight:400;">3</div>
<div class="t" style="left:1090.5px;top:873.8px;font-size:17.6px;line-height:19.68px;color:#1c1c1c;letter-spacing:1.30px;font-weight:400;">Last Updated</div>
<div class="t" style="left:1090.5px;top:899.8px;font-size:17.5px;line-height:19.57px;color:#216ff3;letter-spacing:0.00px;font-weight:400;transform:scaleX(0.8653);transform-origin:0 0;">11/13/19, 01:11</div>
<div style="position:absolute;left:388.0px;top:925.0px;width:68.0px;height:72.0px;background:repeating-linear-gradient(90deg,#fafa76 0,#fafa76 3.3px,#fcfcb8 3.3px,#fcfcb8 4.5px);"></div>
<div style="position:absolute;left:456.0px;top:925.0px;width:468.6px;height:72.0px;background:repeating-linear-gradient(90deg,#9bf977 0,#9bf977 3.3px,#c6fcb3 3.3px,#c6fcb3 4.5px);"></div>
<div style="position:absolute;left:924.6px;top:925.0px;width:5.4px;height:72.0px;background:repeating-linear-gradient(90deg,#fafa76 0,#fafa76 3.3px,#fcfcb8 3.3px,#fcfcb8 4.5px);"></div>
<div style="position:absolute;left:930.0px;top:925.0px;width:275.0px;height:72.0px;background:repeating-linear-gradient(90deg,#9bf977 0,#9bf977 3.3px,#c6fcb3 3.3px,#c6fcb3 4.5px);"></div>
</div></div>
</div></body></html>
